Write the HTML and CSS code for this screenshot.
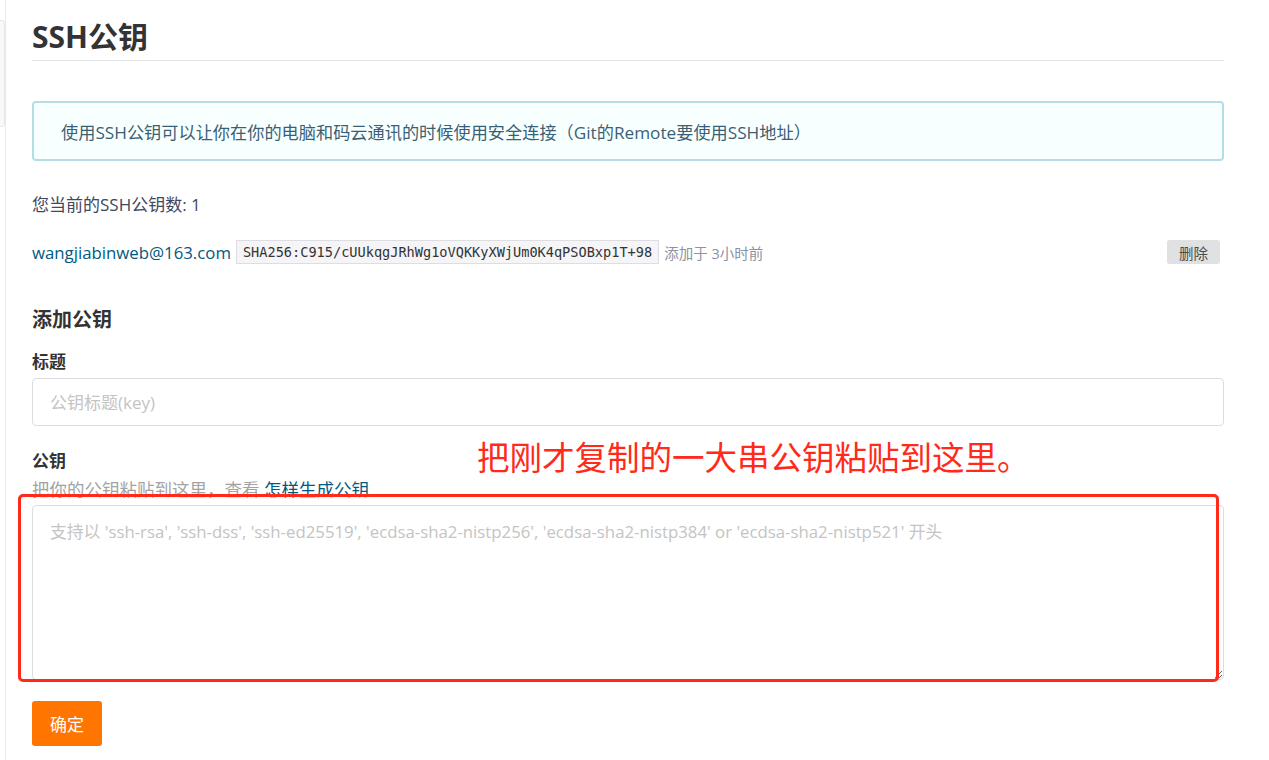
FILE: index.html
```html
<!DOCTYPE html>
<html lang="zh-CN">
<head>
<meta charset="utf-8">
<title>SSH公钥</title>
<link rel="stylesheet" href="styles.css">
</head>
<body>
<div class="page">
  <aside class="sidebar"><div class="sidebar-card"></div></aside>
  <main class="main">
    <h1 class="title">SSH公钥</h1>
    <div class="info">使用SSH公钥可以让你在你的电脑和码云通讯的时候使用安全连接（Git的Remote要使用SSH地址）</div>
    <p class="count">您当前的SSH公钥数: 1</p>
    <div class="key-row">
      <a class="key-name" href="#">wangjiabinweb@163.com</a>
      <code class="fingerprint">SHA256:C915/cUUkqgJRhWg1oVQKKyXWjUm0K4qPSOBxp1T+98</code>
      <span class="added">添加于 3小时前</span>
      <button class="btn-delete" type="button">删除</button>
    </div>
    <h3 class="section">添加公钥</h3>
    <label class="label">标题</label>
    <input class="input" type="text" placeholder="公钥标题(key)">
    <label class="label label-key">公钥</label>
    <div class="help">把你的公钥粘贴到这里，查看 <a href="#">怎样生成公钥</a></div>
    <textarea class="textarea" placeholder="支持以 'ssh-rsa', 'ssh-dss', 'ssh-ed25519', 'ecdsa-sha2-nistp256', 'ecdsa-sha2-nistp384' or 'ecdsa-sha2-nistp521' 开头"></textarea>
    <button class="btn-submit" type="button">确定</button>
  </main>
  <div class="note">把刚才复制的一大串公钥粘贴到这里。</div>
  <div class="note-box"></div>
</div>
</body>
</html>
```

FILE: styles.css
```css
html, body {
  margin: 0;
  padding: 0;
  background: #fff;
}
body {
  font-family: "Open Sans", "Noto Sans CJK SC", sans-serif;
  color: #40485b;
  font-size: 17px;
}
.page {
  position: relative;
  display: flex;
  gap: 26px;
  min-height: 760px;
}
.sidebar {
  width: 5px;
  border-right: 1px solid #ebebeb;
  flex: none;
}
.sidebar-card {
  margin-top: 20px;
  height: 105px;
  background: #f9f9f9;
  border: 1px solid #e6e6e6;
  border-left: none;
  border-radius: 0 4px 4px 0;
}
.main {
  width: 1192px;
  display: flex;
  flex-direction: column;
  align-items: flex-start;
}
.title {
  align-self: stretch;
  margin: 0;
  padding-top: 17px;
  padding-bottom: 3px;
  font-size: 30px;
  line-height: 40px;
  font-weight: 700;
  color: #333;
  border-bottom: 1px solid #e3e3e3;
}
.info {
  align-self: stretch;
  margin-top: 40px;
  height: 60px;
  box-sizing: border-box;
  padding: 0 27px;
  display: flex;
  align-items: center;
  background: #f8ffff;
  border: 2px solid #b4dde5;
  border-radius: 4px;
  color: #3a5f74;
  font-size: 17.2px;
}
.count {
  margin: 32px 0 0;
  line-height: 24px;
  font-size: 17px;
}
.key-row {
  align-self: stretch;
  margin-top: 23px;
  display: flex;
  align-items: center;
  height: 24px;
}
.key-name {
  color: #005980;
  text-decoration: none;
  font-size: 16.8px;
}
.fingerprint {
  margin-left: 5px;
  height: 24px;
  box-sizing: border-box;
  padding: 0 6px;
  display: flex;
  align-items: center;
  background: #f5f5f7;
  border: 1px solid #dedee2;
  font-family: "DejaVu Sans Mono", monospace;
  font-size: 13.6px;
  color: #333;
}
.added {
  margin-left: 5px;
  font-size: 14.5px;
  color: #8c92a4;
}
.btn-delete {
  margin-left: auto;
  margin-right: 4px;
  width: 53px;
  height: 24px;
  border: none;
  border-radius: 3px;
  background: #e0e1e2;
  color: #4a4a4a;
  font-family: "Open Sans", "Noto Sans CJK SC", sans-serif;
  font-size: 14.5px;
  padding: 0;
}
.section {
  margin: 43px 0 0;
  font-size: 20px;
  line-height: 26px;
  font-weight: 700;
  color: #333;
}
.label {
  margin-top: 18px;
  font-size: 17px;
  line-height: 22px;
  font-weight: 700;
  color: #333;
}
.label-key {
  margin-top: 24px;
}
.input {
  align-self: stretch;
  margin-top: 5px;
  height: 48px;
  box-sizing: border-box;
  padding: 0 17px;
  border: 1px solid #dcdde1;
  border-radius: 4px;
  font-family: "Open Sans", "Noto Sans CJK SC", sans-serif;
  font-size: 17px;
  outline: none;
}
.input::placeholder, .textarea::placeholder {
  color: #c4c4c4;
}
.help {
  margin-top: 6px;
  font-size: 17.5px;
  line-height: 22px;
  color: #a3a3a3;
}
.help a {
  color: #005980;
  text-decoration: none;
}
.textarea {
  align-self: stretch;
  margin-top: 5px;
  height: 175px;
  box-sizing: border-box;
  padding: 14px 17px;
  border: 1px solid #dcdde1;
  border-radius: 4px;
  font-family: "Open Sans", "Noto Sans CJK SC", sans-serif;
  font-size: 16.8px;
  line-height: 24px;
  resize: vertical;
  outline: none;
}
.btn-submit {
  margin-top: 21px;
  width: 70px;
  height: 45px;
  border: none;
  border-radius: 3px;
  background: #ff7500;
  color: #fff;
  font-family: "Open Sans", "Noto Sans CJK SC", sans-serif;
  font-size: 17px;
  padding: 0;
}
.note {
  position: absolute;
  left: 477px;
  top: 434px;
  font-family: "Noto Sans CJK SC", sans-serif;
  font-size: 32.5px;
  line-height: 44px;
  color: #ff2a1a;
  white-space: nowrap;
}
.note-box {
  position: absolute;
  left: 18px;
  top: 494px;
  width: 1201px;
  height: 188px;
  box-sizing: border-box;
  border: 3px solid #ff2a1a;
  border-radius: 5px;
  pointer-events: none;
}
```
